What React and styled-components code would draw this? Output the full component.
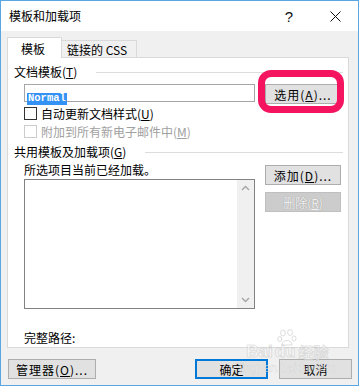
import React from "react";
import styled, { createGlobalStyle } from "styled-components";

const GlobalStyle = createGlobalStyle`
	html, body {
		margin: 0;
		padding: 0;
		background: #ffffff;
	}
	* {
		box-sizing: border-box;
	}
`;

const FONT = `"Noto Sans CJK SC", "Liberation Sans", sans-serif`;

const Window = styled.div`
	position: relative;
	width: 359px;
	height: 386px;
	border: 1px solid #58a6e4;
	background: #f0f0f0;
	font-family: ${FONT};
	font-size: 12px;
	color: #000;
	display: flex;
	flex-direction: column;
	overflow: hidden;
`;

const TitleBar = styled.div`
	height: 30px;
	background: #ffffff;
	display: flex;
	align-items: center;
	padding-left: 8px;
`;

const Title = styled.span`
	flex: 1;
	font-size: 12px;
	line-height: 30px;
`;

const TitleButton = styled.div`
	width: 46px;
	height: 30px;
	display: flex;
	align-items: center;
	justify-content: center;
	font-family: "Liberation Sans", sans-serif;
	font-size: 15px;
	color: #111;
`;

const Content = styled.div`
	padding: 6px 9px 0 6px;
`;

const TabRow = styled.div`
	display: flex;
	align-items: flex-end;
	height: 20px;
`;

const Tab = styled.div`
	position: relative;
	z-index: 1;
	height: ${(p) => (p.$active ? "21px" : "17px")};
	width: ${(p) => p.$width}px;
	margin-bottom: ${(p) => (p.$active ? "-1px" : "0")};
	border: 1px solid #d9d9d9;
	border-bottom: none;
	border-left: ${(p) => (p.$active ? "1px solid #d9d9d9" : "none")};
	background: ${(p) => (p.$active ? "#ffffff" : "#f0f0f0")};
	display: flex;
	align-items: center;
	padding-left: ${(p) => (p.$active ? "13px" : "5px")};
	font-size: 12px;
	white-space: nowrap;
`;

const Panel = styled.div`
	height: 291px;
	border: 1px solid #d9d9d9;
	background: #ffffff;
	padding: 7px 5px 0 6px;
	display: flex;
	flex-direction: column;
`;

const GroupHeader = styled.div`
	display: flex;
	align-items: center;
	height: 14px;
	line-height: 14px;
	margin-top: ${(p) => p.$top || 0}px;
	white-space: nowrap;
`;

const Rule = styled.div`
	flex: 1;
	height: 1px;
	background: #dcdcdc;
	margin-left: ${(p) => p.$gap}px;
`;

const Split = styled.div`
	display: grid;
	grid-template-columns: 231px 76px;
	column-gap: 10px;
	margin-left: 10px;
	margin-top: ${(p) => p.$top || 0}px;
	align-items: start;
`;

const TextBox = styled.div`
	height: 18px;
	border: 1px solid #a6a6a6;
	background: #fff;
	padding: 2px 0 0 2px;
`;

const Selected = styled.span`
	display: inline-block;
	background: #3392f3;
	color: #fff;
	font-family: "Liberation Mono", monospace;
	font-size: 10.5px;
	line-height: 11px;
	height: 12px;
	padding: 0 1px;
	font-weight: bold;
`;

const Button = styled.div`
	height: 20px;
	width: ${(p) => p.$width || 76}px;
	background: ${(p) => (p.$disabled ? "#cccccc" : "#e1e1e1")};
	border: ${(p) =>
		p.$default ? "2px solid #0078d7" : `1px solid ${p.$disabled ? "#bfbfbf" : "#adadad"}`};
	color: ${(p) => (p.$disabled ? "#f2f2f2" : "#000")};
	text-shadow: ${(p) => (p.$disabled ? "0 0 1px #8a8a8a" : "none")};
	display: flex;
	align-items: center;
	justify-content: center;
	font-size: 12px;
	white-space: nowrap;
	letter-spacing: ${(p) => (p.$spaced ? "1px" : "0")};
`;

const ButtonStack = styled.div`
	display: flex;
	flex-direction: column;
	gap: 7px;
	padding-top: 2px;
`;

const CheckRow = styled.div`
	display: flex;
	align-items: center;
	height: 18px;
	margin-left: 10px;
	color: ${(p) => (p.$disabled ? "#a0a0a0" : "#000")};
	white-space: nowrap;
`;

const Box = styled.span`
	width: 13px;
	height: 13px;
	border: 1px solid ${(p) => (p.$disabled ? "#cccccc" : "#333333")};
	background: #fff;
	margin-right: 4px;
`;

const Label = styled.div`
	height: 14px;
	line-height: 14px;
	margin-top: ${(p) => p.$top || 0}px;
	margin-left: ${(p) => p.$indent || 0}px;
	white-space: nowrap;
`;

const ListBox = styled.div`
	margin-top: 2px;
	height: 130px;
	border: 1px solid #828282;
	background: #fff;
	display: flex;
	justify-content: flex-end;
`;

const ScrollTrack = styled.div`
	width: 17px;
	background: #f0f0f0;
	display: flex;
	flex-direction: column;
	justify-content: space-between;
	align-items: center;
	padding: 5px 0 5px;
`;

const Footer = styled.div`
	display: flex;
	align-items: center;
	margin-top: 11px;
	padding: 0 6px 0 7px;
	gap: 11px;
`;

const Spacer = styled.div`
	flex: 1;
`;

const Annotation = styled.div`
	position: absolute;
	left: 257px;
	top: 69px;
	width: 86px;
	height: 43px;
	border: 7px solid #f5145f;
	border-radius: 13px;
	pointer-events: none;
`;

const Watermark = styled.div`
	position: absolute;
	left: 238px;
	top: 331px;
	display: flex;
	flex-direction: column;
	align-items: center;
	pointer-events: none;
	color: rgba(255, 255, 255, 0.6);
	-webkit-text-stroke: 1px rgba(160, 160, 160, 0.3);
	font-family: "Liberation Sans", sans-serif;
`;

const MarkTitle = styled.div`
	display: flex;
	align-items: flex-end;
	height: 27px;
	font-size: 17px;
	font-weight: bold;
	line-height: 15px;
`;

const DuWrap = styled.span`
	position: relative;
	margin: 0 3px 0 2px;
`;

const PawSpot = styled.span`
	position: absolute;
	left: 2px;
	top: -15px;
`;

const MarkCn = styled.span`
	font-family: ${FONT};
	font-size: 15px;
`;

const MarkSub = styled.div`
	font-size: 12px;
	line-height: 13px;
	margin-top: 3px;
	-webkit-text-stroke: 0.5px rgba(160, 160, 160, 0.3);
`;

const Chevron = ({ up }) => (
	<svg width="9" height="6" viewBox="0 0 9 6">
		<path
			d={up ? "M1 5 L4.5 1.5 L8 5" : "M1 1 L4.5 4.5 L8 1"}
			fill="none"
			stroke="#a3a3a3"
			strokeWidth="1.3"
		/>
	</svg>
);

const Close = () => (
	<svg width="11" height="11" viewBox="0 0 11 11">
		<path d="M0.5 0.5 L10.5 10.5 M10.5 0.5 L0.5 10.5" stroke="#111" strokeWidth="1" />
	</svg>
);

const Paw = () => (
	<svg width="20" height="17" viewBox="0 0 20 17">
		<g fill="rgba(255,255,255,0.5)" stroke="rgba(160,160,160,0.35)" strokeWidth="1">
			<ellipse cx="6" cy="4" rx="2.4" ry="3" />
			<ellipse cx="13" cy="3.5" rx="2.4" ry="3" />
			<ellipse cx="2.8" cy="10" rx="2" ry="2.6" />
			<ellipse cx="17" cy="9.5" rx="2" ry="2.6" />
			<path d="M5 16 C5 10 15 10 15 16 Z" />
		</g>
	</svg>
);

const App = () => {
	return (
		<>
			<GlobalStyle />
			<Window>
				<TitleBar>
					<Title>模板和加载项</Title>
					<TitleButton>?</TitleButton>
					<TitleButton>
						<Close />
					</TitleButton>
				</TitleBar>

				<Content>
					<TabRow>
						<Tab $active $width={55}>模板</Tab>
						<Tab $width={75}>链接的 CSS</Tab>
					</TabRow>

					<Panel>
						<GroupHeader>
							<span>文档模板(<u>T</u>)</span>
							<Rule $gap={19} />
						</GroupHeader>

						<Split $top={5}>
							<TextBox>
								<Selected>Normal</Selected>
							</TextBox>
							<Button $spaced>选用(<u>A</u>)...</Button>
						</Split>

						<CheckRow>
							<Box />
							自动更新文档样式(<u>U</u>)
						</CheckRow>
						<CheckRow $disabled>
							<Box $disabled />
							附加到所有新电子邮件中(<u>M</u>)
						</CheckRow>

						<GroupHeader $top={5}>
							<span>共用模板及加载项(<u>G</u>)</span>
							<Rule $gap={19} />
						</GroupHeader>

						<Split $top={4}>
							<div>
								<Label>所选项目当前已经加载。</Label>
								<ListBox>
									<ScrollTrack>
										<Chevron up />
										<Chevron />
									</ScrollTrack>
								</ListBox>
							</div>
							<ButtonStack>
								<Button $spaced>添加(<u>D</u>)...</Button>
								<Button $disabled>删除(<u>R</u>)</Button>
							</ButtonStack>
						</Split>

						<Label $top={22} $indent={10}>完整路径:</Label>
					</Panel>
				</Content>

				<Footer>
					<Button $width={88} $spaced>管理器(<u>O</u>)...</Button>
					<Spacer />
					<Button $width={73} $default>确定</Button>
					<Button $width={73}>取消</Button>
				</Footer>

				<Annotation />
				<Watermark>
					<MarkTitle>
						Bai
						<DuWrap>
							du
							<PawSpot>
								<Paw />
							</PawSpot>
						</DuWrap>
						<MarkCn>经验</MarkCn>
					</MarkTitle>
					<MarkSub>jingyan.baidu.com</MarkSub>
				</Watermark>
			</Window>
		</>
	);
};

export default App;
